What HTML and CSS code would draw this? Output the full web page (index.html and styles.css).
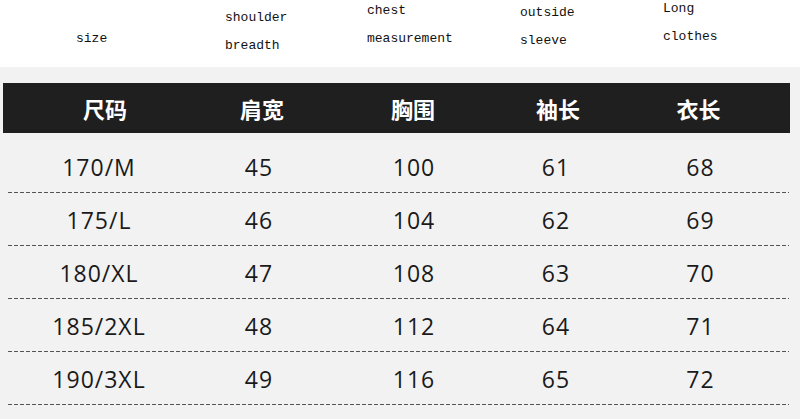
FILE: index.html
```html
<!DOCTYPE html>
<html lang="zh">
<head>
<meta charset="utf-8">
<title>Size chart</title>
<link rel="stylesheet" href="styles.css">
</head>
<body class="page">
  <div class="labels">
    <div class="label label-size">size</div>
    <div class="label label-shoulder">shoulder<br>breadth</div>
    <div class="label label-chest">chest<br>measurement</div>
    <div class="label label-sleeve">outside<br>sleeve</div>
    <div class="label label-long">Long<br>clothes</div>
  </div>
  <div class="sheet">
    <div class="head">
      <div>尺码</div><div>肩宽</div><div>胸围</div><div>袖长</div><div>衣长</div>
    </div>
    <div class="rows">
      <div class="row"><div>170/M</div><div>45</div><div>100</div><div>61</div><div>68</div></div>
      <div class="row"><div>175/L</div><div>46</div><div>104</div><div>62</div><div>69</div></div>
      <div class="row"><div>180/XL</div><div>47</div><div>108</div><div>63</div><div>70</div></div>
      <div class="row"><div>185/2XL</div><div>48</div><div>112</div><div>64</div><div>71</div></div>
      <div class="row"><div>190/3XL</div><div>49</div><div>116</div><div>65</div><div>72</div></div>
    </div>
  </div>
</body>
</html>
```
FILE: styles.css
```css
html, body {
  margin: 0;
  padding: 0;
}
.page {
  width: 800px;
  height: 419px;
  overflow: hidden;
  background: #f2f2f2;
}
.labels {
  height: 67px;
  background: #ffffff;
  display: grid;
  grid-template-columns: 149px 142px 153px 143px 1fr;
  padding-left: 76px;
  align-items: start;
  font-family: "Liberation Mono", "DejaVu Sans Mono", monospace;
  font-size: 13px;
  line-height: 28px;
  color: #111;
}
.label-size { margin-top: 25px; }
.label-shoulder { margin-top: 4px; }
.label-chest { margin-top: -3px; }
.label-sleeve { margin-top: -1px; }
.label-long { margin-top: -5px; }

.sheet {
  padding: 16px 0 0 3px;
}
.head {
  width: 787px;
  height: 50px;
  background: #1f1f1f;
  display: grid;
  grid-template-columns: 204px 110px 192px 98px 1fr;
  align-items: center;
  text-align: center;
  color: #ffffff;
  font-family: "Noto Sans CJK SC", "Noto Sans", sans-serif;
  font-weight: 700;
  font-size: 22px;
}
.rows {
  padding: 7px 0 0 5px;
}
.row {
  width: 781px;
  height: 53px;
  display: grid;
  grid-template-columns: 182px 138px 172px 112px 1fr;
  align-items: center;
  text-align: center;
  background-image: repeating-linear-gradient(to right, #555 0 4px, transparent 4px 6px);
  background-size: 100% 1px;
  background-position: left bottom;
  background-repeat: no-repeat;
  font-family: "Open Sans", "Noto Sans", sans-serif;
  font-size: 23px;
  letter-spacing: 1px;
  color: #1a1a1a;
}
```
